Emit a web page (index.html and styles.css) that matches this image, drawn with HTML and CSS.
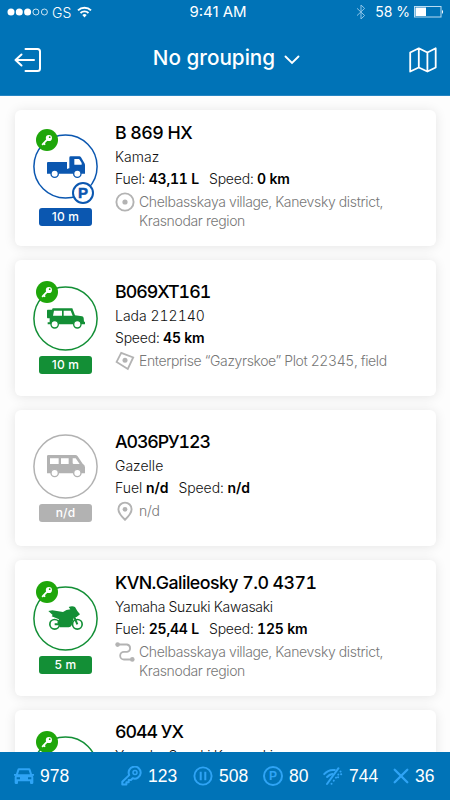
FILE: index.html
```html
<!DOCTYPE html>
<html lang="en">
<head>
<meta charset="utf-8">
<title>Vehicles</title>
<link rel="stylesheet" href="styles.css">
</head>
<body>
<svg class="defs" aria-hidden="true">
  <symbol id="key" viewBox="0 0 12 12"><circle cx="7.9" cy="4" r="3.1" fill="#fff"/><path d="M6.6 5.2 1.6 10.3M2.6 9.2l1 1" stroke="#fff" stroke-width="1.8" stroke-linecap="round"/><circle cx="8.7" cy="3.2" r=".9" fill="#1fa60a"/></symbol>
  <symbol id="circle" viewBox="0 0 65 65"><circle cx="32.5" cy="32.5" r="31.6" fill="none" stroke="currentColor" stroke-width="1.5"/></symbol>
</svg>
<div class="app">
  <header class="header">
    <div class="status">
      <div class="carrier">
        <svg width="42" height="10" viewBox="0 0 42 10"><g fill="#fff"><circle cx="4" cy="5" r="3.5"/><circle cx="12.3" cy="5" r="3.5"/><circle cx="20.6" cy="5" r="3.5"/></g><g fill="none" stroke="#fff" stroke-width=".8"><circle cx="28.9" cy="5" r="3"/><circle cx="37.4" cy="5" r="3"/></g></svg>
        <span>GS</span>
        <svg class="wifi" width="15" height="12" viewBox="0 0 15 12"><g fill="none" stroke="#fff" stroke-width="1.9"><path d="M1 4.4a9.2 9.2 0 0 1 13 0"/><path d="M3.5 7a5.7 5.7 0 0 1 8 0"/></g><path d="M7.5 11.4 5.3 9.1a3.1 3.1 0 0 1 4.4 0z" fill="#fff"/></svg>
      </div>
      <span class="time">9:41 AM</span>
      <div class="power">
        <svg width="10" height="16" viewBox="0 0 10 16"><path d="m1 4.3 7.6 7.2L5 15V1l3.6 3.4L1 11.6" fill="none" stroke="#8cc4e8" stroke-width="1"/></svg>
        <span>58 %</span>
        <svg width="31" height="12" viewBox="0 0 31 12"><rect x=".5" y=".5" width="26.5" height="10.5" fill="none" stroke="#b9dcf2"/><path d="M1.5 1.5H12V10H1.5z" fill="#fff"/><path d="M28 3.7q2.2 2 0 4.3z" fill="#fff"/></svg>
      </div>
    </div>
    <div class="bar">
      <svg width="28" height="26" viewBox="0 0 28 26"><path d="M11.5 2H23.5Q26 2 26 4.5V21.5Q26 24 23.5 24H11.5M20 13H1.5M7.5 7.5 1.5 13 7.5 18.5" fill="none" stroke="#fff" stroke-width="2" stroke-linecap="round" stroke-linejoin="round"/></svg>
      <div class="grouping"><h1>No grouping</h1><svg width="16" height="10" viewBox="0 0 16 10"><path d="M1.5 1.5 8 8l6.5-6.5" fill="none" stroke="#fff" stroke-width="1.9" stroke-linecap="round"/></svg></div>
      <svg width="28" height="26" viewBox="0 0 28 26"><path d="M1.2 5.5 9.8 1.3 18.4 5.5 26.7 1.3V20.5L18.4 24.5 9.8 20.5 1.2 24.5zM9.8 1.3V20.5M18.4 5.5V24.5" fill="none" stroke="#fff" stroke-width="1.8" stroke-linejoin="round"/></svg>
    </div>
  </header>

  <main class="list">
    <article class="card blue">
      <div class="state parked">
        <div class="ring">
          <svg class="circle"><use href="#circle"/></svg>
          <svg width="38" height="22" viewBox="0 0 114 66"><path fill="currentColor" d="M3 18H60V37H67V5Q67 1 71 1H97Q100 1 102 4L112 21Q114 24 114 28V53H0V21Q0 18 3 18z"/><path fill="#fff" d="M82 9H95Q97 9 98 11L104 21V26H82zM60 14H64V38H60z"/><g fill="#fff" stroke="currentColor" stroke-width="4"><circle cx="23" cy="53" r="11"/><circle cx="91" cy="53" r="11"/></g></svg>
          <span class="key"><svg width="12" height="12"><use href="#key"/></svg></span>
          <span class="park">P</span>
        </div>
        <span class="pill"><span>10 m</span></span>
      </div>
      <div class="info">
        <h2 class="plate-one">B 869 HX</h2>
        <p class="model">Kamaz</p>
        <p class="stats"><span>Fuel: <b>43,11 L</b></span><span>Speed: <b>0 km</b></span></p>
        <div class="place"><svg width="20" height="20" viewBox="0 0 20 20"><circle cx="10" cy="10" r="8.6" fill="none" stroke="#b3b3b3" stroke-width="1.9"/><circle cx="10" cy="10" r="2.6" fill="#b3b3b3"/></svg><p>Chelbasskaya village, Kanevsky district,<br>Krasnodar region</p></div>
      </div>
    </article>

    <article class="card green">
      <div class="state">
        <div class="ring">
          <svg class="circle"><use href="#circle"/></svg>
          <svg width="38" height="22" viewBox="0 0 114 66"><path fill="currentColor" d="M10 5H15L17 1H76L84 22 105 25Q109 26 110 30L111 41H114V49H2V43H8V31H2Q0 31 0 28V8Q0 5 2 5H8z"/><path fill="#fff" d="M21 8H45V23H18zM50 8H71L77 23H50z"/><g fill="#fff" stroke="currentColor" stroke-width="4"><circle cx="23" cy="49" r="11"/><circle cx="91" cy="49" r="11"/></g></svg>
          <span class="key"><svg width="12" height="12"><use href="#key"/></svg></span>
        </div>
        <span class="pill"><span>10 m</span></span>
      </div>
      <div class="info">
        <h2 class="plate-two">B069XT161</h2>
        <p class="model">Lada 212140</p>
        <p class="stats"><span>Speed: <b>45 km</b></span></p>
        <div class="place"><svg width="20" height="20" viewBox="0 0 20 20"><path d="M6.2 1.8 18.2 6.4 12.8 18 1.6 10.9z" fill="none" stroke="#b3b3b3" stroke-width="1.8"/><circle cx="10" cy="9.3" r="2.5" fill="#b3b3b3"/></svg><p class="field">Enterprise “Gazyrskoe” Plot 22345, field</p></div>
      </div>
    </article>

    <article class="card gray">
      <div class="state">
        <div class="ring">
          <svg class="circle"><use href="#circle"/></svg>
          <svg width="38" height="23" viewBox="0 0 114 69"><path fill="currentColor" d="M4 0H85Q89 0 92 4L107 26Q114 30 114 37V55H0V4Q0 0 4 0z"/><path fill="#fff" d="M9 10H35V27H9zM42 10H65V27H42zM77 10H86L98 27H80Q77 27 77 24z"/><g fill="#fff" stroke="currentColor" stroke-width="4"><circle cx="23" cy="54" r="11"/><circle cx="91" cy="54" r="11"/></g></svg>
        </div>
        <span class="pill"><span>n/d</span></span>
      </div>
      <div class="info">
        <h2 class="plate-three">А036РУ123</h2>
        <p class="model">Gazelle</p>
        <p class="stats loose"><span>Fuel <b>n/d</b></span><span>Speed: <b>n/d</b></span></p>
        <div class="place"><svg width="20" height="20" viewBox="0 0 20 20"><path d="M10 18.7Q3.4 12.5 3.4 8.2A6.6 6.6 0 0 1 16.6 8.2Q16.6 12.5 10 18.7z" fill="none" stroke="#b3b3b3" stroke-width="1.9"/><circle cx="10" cy="8.3" r="2.4" fill="#b3b3b3"/></svg><p>n/d</p></div>
      </div>
    </article>

    <article class="card green">
      <div class="state">
        <div class="ring">
          <svg class="circle"><use href="#circle"/></svg>
          <svg width="38" height="26" viewBox="0 0 114 78"><path fill="currentColor" d="M4 15 16 13 48 18Q58 10 70 10L65 3Q76-1 84 3L91 15 99 25Q91 34 81 34L74 58Q71 64 65 64H38L31 49 36 40 14 31 17 27z"/><g fill="none" stroke="currentColor" stroke-width="5"><circle cx="23" cy="55" r="14.5"/><circle cx="91" cy="55" r="14.5"/></g><path d="M23 55H40M80 28 91 55" stroke="currentColor" stroke-width="6"/></svg>
          <span class="key"><svg width="12" height="12"><use href="#key"/></svg></span>
        </div>
        <span class="pill"><span>5 m</span></span>
      </div>
      <div class="info">
        <h2 class="plate-four">KVN.Galileosky 7.0 4371</h2>
        <p class="model brands">Yamaha Suzuki Kawasaki</p>
        <p class="stats"><span>Fuel: <b>25,44 L</b></span><span>Speed: <b>125 km</b></span></p>
        <div class="place"><svg width="20" height="20" viewBox="0 0 20 20"><path d="M3 2.5H12A3.7 3.7 0 0 1 12 9.8H9A3.7 3.7 0 0 0 9 17.5H17" fill="none" stroke="#b3b3b3" stroke-width="1.8"/><circle cx="2.6" cy="2.6" r="2.3" fill="#b3b3b3"/><circle cx="17.3" cy="17.4" r="2.3" fill="#b3b3b3"/></svg><p>Chelbasskaya village, Kanevsky district,<br>Krasnodar region</p></div>
      </div>
    </article>

    <article class="card green">
      <div class="state">
        <div class="ring"><svg class="circle"><use href="#circle"/></svg><span class="key"><svg width="12" height="12"><use href="#key"/></svg></span></div>
      </div>
      <div class="info">
        <h2 class="plate-five">6044 УХ</h2>
        <p class="model brands">Yamaha Suzuki Kawasaki</p>
      </div>
    </article>
  </main>

  <footer class="footer">
    <div class="count total"><svg width="20" height="18" viewBox="0 0 60 54"><path fill="currentColor" fill-rule="evenodd" d="M15 4H45Q49 4 50 8L54 21H60V26H56Q58 28 58 32V47Q58 51 54 51H51Q48 51 48 47V43H12V47Q12 51 9 51H6Q2 51 2 47V32Q2 28 4 26H0V21H6L10 8Q11 4 15 4zM16 10 12 22H48L44 10zM8 31V37H18V31zM42 31V37H52V31z"/></svg><span>978</span></div>
    <div class="count keys"><svg width="21" height="20" viewBox="0 0 21 20"><path d="M8.2 9.1A6 6 0 1 1 11.7 12.3L10 14H7.7V16.2H5.4V18.5H1.3V15.8z" fill="none" stroke="currentColor" stroke-width="2" stroke-linejoin="round"/><circle cx="14" cy="6.6" r="2" fill="none" stroke="currentColor" stroke-width="1.5"/></svg><span>123</span></div>
    <div class="count pause"><svg width="20" height="20" viewBox="0 0 20 20"><g fill="none" stroke="currentColor"><circle cx="10" cy="10" r="8.6" stroke-width="1.9"/><path d="M7.7 5.7V14.3M12.3 5.7V14.3" stroke-width="2"/></g></svg><span>508</span></div>
    <div class="count parking"><span class="p-icon">P</span><span>80</span></div>
    <div class="count offline"><svg width="20" height="20" viewBox="0 0 20 20"><g fill="none" stroke="currentColor" stroke-linecap="round"><path d="M4 18 15.5 2.2" stroke-width="2"/><path d="M1.2 8.1Q5.8 3 11.8 4.1M4.1 11Q6.4 8.5 9.4 8" stroke-width="2"/><path d="M8.5 17.8 19 3.5" stroke-width="2" stroke-dasharray=".1 3.7"/><path d="M15 11.2h.1M18.1 8.3h.1" stroke-width="2"/></g></svg><span>744</span></div>
    <div class="count lost"><svg width="16" height="16" viewBox="0 0 16 16"><path d="M1.7 1.7 14.3 14.3M14.3 1.7 1.7 14.3" stroke="currentColor" stroke-width="2.3" stroke-linecap="round"/></svg><span>36</span></div>
  </footer>
</div>
</body>
</html>
```

FILE: styles.css
```css
* { box-sizing: border-box; }
body { margin: 0; font-family: Inter, "Liberation Sans", sans-serif; color: #000; }
h1, h2, p { margin: 0; }
svg { display: block; flex: none; }
.defs { width: 0; height: 0; position: absolute; }
.app { width: 450px; height: 800px; display: flex; flex-direction: column; overflow: hidden; background: #fdfdfd; }

.header { flex: none; height: 96px; background: #0073b7; color: #fff; border-bottom: 1px solid #2585c3; }
.status { display: grid; grid-template-columns: 1fr auto 1fr; height: 24px; padding: 0 5px 0 7px; align-items: center; font-size: 14.5px; font-weight: 400; }
.carrier, .power { display: flex; align-items: center; gap: 4px; }
.carrier { gap: 3px; }
.carrier span { font-size: 14px; font-weight: 300; }
.wifi { margin-left: 3px; }
.power { justify-content: flex-end; }
.power span { margin: 0 0 1px 5px; font-size: 14px; }
.time { margin: 0 16px 2px 0; font-size: 15px; }
.bar { display: flex; align-items: center; justify-content: space-between; height: 71px; padding: 0 13px 0 14px; }
.grouping { display: flex; align-items: center; gap: 9px; margin: 0 0 4px 2px; }
.grouping svg { margin-top: 5px; }
h1 { font-size: 20.7px; font-weight: 500; line-height: 28px; }

.list { flex: 1; min-height: 0; overflow: hidden; display: flex; flex-direction: column; gap: 14px; padding: 14px 14px 0 15px; }
.card { flex: none; height: 136px; display: flex; background: #fff; border-radius: 6px; box-shadow: 0 1px 12px rgba(0, 0, 0, .1); }
.blue { color: #0b57b0; }
.green { color: #138f36; }
.gray { color: #b2b2b2; }
.state { width: 100px; display: flex; flex-direction: column; align-items: center; padding: 26px 0 0 1px; gap: 5px; }
.parked { padding-top: 24px; gap: 9px; }
.gray .state { padding-top: 24px; }
.ring { position: relative; width: 65px; height: 65px; display: flex; align-items: center; justify-content: center; }
.circle { position: absolute; inset: 0; width: 65px; height: 65px; }
.key { position: absolute; left: 3px; top: -5px; width: 22px; height: 22px; border-radius: 50%; background: #1fa60a; display: flex; align-items: center; justify-content: center; }
.park { position: absolute; right: 4px; bottom: -5px; width: 22px; height: 22px; border: 2px solid currentColor; border-radius: 50%; background: #fff; font-family: "Liberation Sans", sans-serif; font-size: 15px; font-weight: 700; line-height: 18px; text-align: center; -webkit-text-stroke: .5px currentColor; }
.pill { width: 53px; height: 18px; border-radius: 3px; background: currentColor; text-align: center; font-size: 12px; font-weight: 500; line-height: 17px; letter-spacing: .2px; }
.pill span { color: #fff; }

.info { display: flex; flex-direction: column; justify-content: center; padding-bottom: 7px; color: #111; font-size: 14px; font-weight: 300; white-space: nowrap; font-variant-numeric: tabular-nums; }
h2 { font-size: 17.8px; font-weight: 500; line-height: 26px; color: #000; }
.plate-one { letter-spacing: -.55px; }
.plate-two { letter-spacing: -1px; }
.plate-three { letter-spacing: -1.1px; }
.plate-four { letter-spacing: -.56px; }
.plate-five { letter-spacing: -1px; }
.model { line-height: 22px; }
.brands { letter-spacing: -.3px; }
.stats { display: flex; gap: 10px; line-height: 21px; letter-spacing: -.2px; }
.stats.loose { letter-spacing: -.05px; }
.stats b { font-weight: 600; color: #000; }
.place { display: flex; gap: 4px; margin-top: 3px; color: #777; line-height: 19px; letter-spacing: -.35px; }
.field { letter-spacing: -.38px; }
.card:last-child .info { justify-content: flex-start; padding-top: 9px; }

.footer { flex: none; height: 48px; display: flex; align-items: center; background: #0073b7; color: #2fa4f5; padding-left: 14px; font-family: "Liberation Sans", sans-serif; font-size: 17.5px; }
.count { display: flex; align-items: center; gap: 6px; }
.count > span:last-child { color: #fff; }
.total { width: 107px; }
.keys { width: 72px; }
.pause { width: 70px; }
.parking { width: 60px; }
.offline { width: 70px; }
.p-icon { width: 20px; height: 20px; border: 2px solid; border-radius: 50%; font-size: 12px; font-weight: 700; line-height: 16px; text-align: center; }
```
